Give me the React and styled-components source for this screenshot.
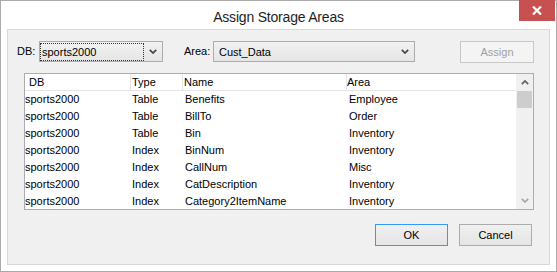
import React from 'react'
import styled, { createGlobalStyle } from 'styled-components'

const GlobalStyle = createGlobalStyle`
    html, body {
        margin: 0;
        padding: 0;
        background: #fff;
    }
    body {
        font-family: "Liberation Sans", Arial, sans-serif;
        font-size: 11px;
        color: #000;
    }
    * {
        box-sizing: border-box;
    }
`

const rows = [
    ['sports2000', 'Table', 'Benefits', 'Employee'],
    ['sports2000', 'Table', 'BillTo', 'Order'],
    ['sports2000', 'Table', 'Bin', 'Inventory'],
    ['sports2000', 'Index', 'BinNum', 'Inventory'],
    ['sports2000', 'Index', 'CallNum', 'Misc'],
    ['sports2000', 'Index', 'CatDescription', 'Inventory'],
    ['sports2000', 'Index', 'Category2ItemName', 'Inventory'],
]

const headers = ['DB', 'Type', 'Name', 'Area']
const headerPad = [4, 1, 1, 0]
const rowPad = [0, 2, 3, 3]

const Window = styled.div`
    width: 557px;
    height: 272px;
    border: 1px solid #ababab;
    background: #fff;
    padding: 0 6px 6px;
    display: flex;
    flex-direction: column;
`

const TitleBar = styled.div`
    position: relative;
    height: 28px;
    display: flex;
    align-items: center;
    justify-content: center;
    padding-top: 3px;
    font-size: 14px;
    color: #1e1e1e;
    letter-spacing: -0.2px;
`

const CloseButton = styled.div`
    position: absolute;
    top: -1px;
    right: -5px;
    width: 36px;
    height: 21px;
    background: #c75050;
    display: flex;
    align-items: center;
    justify-content: center;
`

const Client = styled.div`
    flex: 1;
    background: #f0f0f0;
    border: 1px solid #d9d9d9;
    padding-top: 11px;
    display: flex;
    flex-direction: column;
`

const TopRow = styled.div`
    display: grid;
    grid-template-columns: 22px 124px 21px 29px 202px 45px 74px;
    align-items: start;
    padding-left: 9px;
`

const Label = styled.div`
    height: 21px;
    line-height: 20px;
    white-space: nowrap;
`

const Combo = styled.div`
    height: 21px;
    border: 1px solid #acacac;
    background: linear-gradient(#f2f2f2, #e5e5e5);
    display: flex;
    align-items: center;
    padding-left: ${p => (p.focused ? 0 : 4)}px;
`

const ComboText = styled.div`
    flex: 1;
    height: 18px;
    line-height: 16px;
    white-space: nowrap;
    border: 1px dotted ${p => (p.focused ? '#333' : 'transparent')};
    padding-left: ${p => (p.focused ? 1 : 0)}px;
`

const ComboArrow = styled.div`
    width: 18px;
    display: flex;
    justify-content: center;
    align-items: center;
`

const Button = styled.div`
    grid-column: ${p => p.col || 'auto'};
    width: ${p => p.w}px;
    height: 22px;
    line-height: 20px;
    text-align: center;
    border: 1px solid ${p => (p.disabled ? '#c8c8c8' : p.primary ? '#3399ff' : '#acacac')};
    background: ${p => (p.disabled ? '#f4f4f4' : 'linear-gradient(#f0f0f0, #e5e5e5)')};
    color: ${p => (p.disabled ? '#a0a0a0' : '#000')};
`

const List = styled.div`
    margin: 10px 0 0 16px;
    width: 510px;
    height: 137px;
    border: 1px solid #abadb3;
    background: #fff;
    display: flex;
    overflow: hidden;
`

const ListBody = styled.div`
    flex: 1;
    overflow: hidden;
`

const Grid = styled.div`
    display: grid;
    grid-template-columns: 105px 52px 164px 1fr;
    height: 17px;
    line-height: ${p => (p.header ? 16 : 17)}px;
    border-bottom: ${p => (p.header ? '1px solid #e5e5e5' : 'none')};
`

const Cell = styled.div`
    padding-left: ${p => p.pad}px;
    white-space: nowrap;
    overflow: hidden;
    border-left: ${p => (p.sep ? '1px solid #e5e5e5' : 'none')};
`

const ScrollBar = styled.div`
    width: 17px;
    background: #f0f0f0;
    display: flex;
    flex-direction: column;
`

const ScrollArrow = styled.div`
    height: 17px;
    display: flex;
    align-items: center;
    justify-content: center;
`

const Thumb = styled.div`
    height: 17px;
    margin: 0 1px;
    background: #cdcdcd;
`

const Track = styled.div`
    flex: 1;
`

const ButtonRow = styled.div`
    display: flex;
    justify-content: flex-end;
    gap: 11px;
    margin-top: 14px;
    padding-right: 17px;
`

const Chevron = ({ up, color = '#444' }) => (
    <svg width="8" height="5" viewBox="0 0 8 5">
        <polyline
            points={up ? '0.8,4.2 4,1 7.2,4.2' : '0.8,0.8 4,4 7.2,0.8'}
            fill="none"
            stroke={color}
            strokeWidth="1.7"
        />
    </svg>
)

export default function App() {
    return (
        <>
            <GlobalStyle />
            <Window>
                <TitleBar>
                    Assign Storage Areas
                    <CloseButton>
                        <svg width="10" height="9" viewBox="0 0 10 9">
                            <path d="M1 0.5 L9 8.5 M9 0.5 L1 8.5" stroke="#fff" strokeWidth="2.2" />
                        </svg>
                    </CloseButton>
                </TitleBar>
                <Client>
                    <TopRow>
                        <Label>DB:</Label>
                        <Combo focused>
                            <ComboText focused>sports2000</ComboText>
                            <ComboArrow><Chevron /></ComboArrow>
                        </Combo>
                        <span />
                        <Label>Area:</Label>
                        <Combo>
                            <ComboText>Cust_Data</ComboText>
                            <ComboArrow><Chevron /></ComboArrow>
                        </Combo>
                        <Button col={7} w={74} disabled>Assign</Button>
                    </TopRow>
                    <List>
                        <ListBody>
                            <Grid header>
                                {headers.map((h, i) => (
                                    <Cell key={h} pad={headerPad[i]} sep={i > 0}>{h}</Cell>
                                ))}
                            </Grid>
                            {rows.map((r, index) => (
                                <Grid key={index}>
                                    {r.map((c, i) => (
                                        <Cell key={i} pad={rowPad[i]}>{c}</Cell>
                                    ))}
                                </Grid>
                            ))}
                        </ListBody>
                        <ScrollBar>
                            <ScrollArrow><Chevron up color="#606060" /></ScrollArrow>
                            <Thumb />
                            <Track />
                            <ScrollArrow><Chevron color="#a6a6a6" /></ScrollArrow>
                        </ScrollBar>
                    </List>
                    <ButtonRow>
                        <Button w={73} primary>OK</Button>
                        <Button w={73}>Cancel</Button>
                    </ButtonRow>
                </Client>
            </Window>
        </>
    )
}
